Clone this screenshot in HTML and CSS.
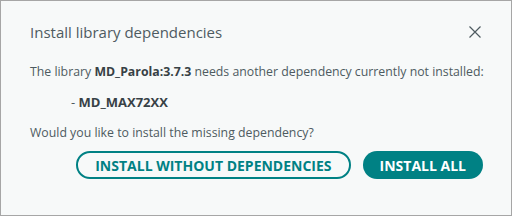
FILE: index.html
```html
<!DOCTYPE html>
<html>
<head>
<meta charset="utf-8">
<link rel="stylesheet" href="styles.css">
</head>
<body>
<div class="dialog">
  <div class="header">
    <div class="title">Install library dependencies</div>
    <button class="close" aria-label="Close">
      <svg width="14" height="14" viewBox="0 0 14 14"><path d="M1.5 1.5 L12.5 12.5 M12.5 1.5 L1.5 12.5" stroke="#4e5b61" stroke-width="1.2" fill="none"/></svg>
    </button>
  </div>
  <div class="content">
    <p class="line">The library <b>MD_Parola:3.7.3</b> needs another dependency currently not installed:</p>
    <p class="dep">- <b>MD_MAX72XX</b></p>
    <p class="line">Would you like to install the missing dependency?</p>
  </div>
  <div class="buttons">
    <button class="btn secondary">INSTALL WITHOUT DEPENDENCIES</button>
    <button class="btn primary">INSTALL ALL</button>
  </div>
</div>
</body>
</html>
```
FILE: styles.css
```css
html, body {
  margin: 0;
  padding: 0;
  background: #f7f9f9;
}
.dialog {
  box-sizing: border-box;
  width: 512px;
  height: 216px;
  border: 1px solid #a6a6a6;
  background: #f7f9f9;
  font-family: "Open Sans", "Noto Sans", sans-serif;
  color: #4e5b61;
  padding: 0 28px 0 29px;
}
.header {
  display: flex;
  align-items: center;
  justify-content: space-between;
  height: 62px;
}
.title {
  font-size: 15px;
}
.close {
  border: none;
  background: none;
  padding: 0;
  width: 14px;
  height: 14px;
  margin-right: 1px;
  display: flex;
}
.content p {
  margin: 0;
  font-size: 12.3px;
  line-height: 18px;
  white-space: nowrap;
}
.content .dep {
  padding-left: 41px;
  margin-top: 12px;
  margin-bottom: 13px;
  font-size: 13px;
}
.content b {
  font-weight: 700;
  color: #374146;
}
.buttons {
  display: flex;
  justify-content: flex-end;
  gap: 12px;
  margin-top: 9px;
}
.btn {
  font-family: "Open Sans", "Noto Sans", sans-serif;
  font-weight: 700;
  font-size: 14px;
  letter-spacing: 0;
  height: 28px;
  border-radius: 14px;
  box-sizing: border-box;
  padding: 0 17px;
  cursor: pointer;
}
.secondary {
  background: transparent;
  color: #008184;
  border: 2px solid #008184;
}
.primary {
  background: #008184;
  color: #fff;
  border: none;
}
```
